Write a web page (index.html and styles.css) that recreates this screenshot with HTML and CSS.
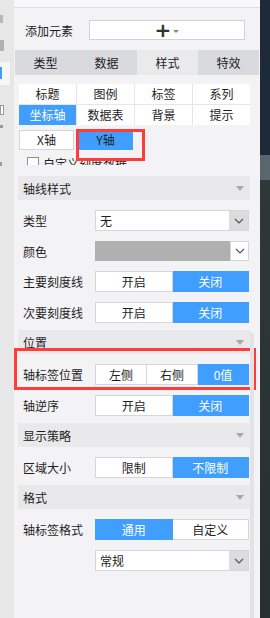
FILE: index.html
```html
<!DOCTYPE html>
<html lang="zh">
<head>
<meta charset="utf-8">
<title>样式面板</title>
<link rel="stylesheet" href="styles.css">
</head>
<body>
<nav class="rail">
  <span class="ri ri-1"></span>
  <span class="ri ri-2"></span>
  <span class="ri-active"><span class="ri-blue"></span></span>
  <span class="ri ri-4"></span>
  <span class="ri ri-5"></span>
  <span class="ri ri-6"></span>
</nav>
<main class="panel">
  <div class="topbar"></div>
  <div class="add">
    <span class="add-label">添加元素</span>
    <div class="add-input"><span class="plus">+</span><span class="caret-sm"></span></div>
  </div>
  <div class="tabs">
    <span class="tab">类型</span>
    <span class="tab">数据</span>
    <span class="tab active">样式</span>
    <span class="tab">特效</span>
  </div>
  <div class="subgrid">
    <span class="cell">标题</span>
    <span class="cell">图例</span>
    <span class="cell">标签</span>
    <span class="cell">系列</span>
    <span class="cell on">坐标轴</span>
    <span class="cell">数据表</span>
    <span class="cell">背景</span>
    <span class="cell">提示</span>
  </div>
  <div class="axis">
    <span class="axis-btn">X轴</span>
    <span class="axis-btn on">Y轴<span class="mark mark-y"></span></span>
  </div>
  <div class="check"><span class="box"></span><span class="check-text">自定义刻度数据</span></div>

  <div class="section first"><span>轴线样式</span><span class="tri"></span></div>
  <div class="row">
    <span class="label">类型</span>
    <div class="select"><span class="sel-text">无</span><span class="sel-btn"><svg width="10" height="6" viewBox="0 0 10 6"><polyline points="1,1 5,5 9,1" fill="none" stroke="#555" stroke-width="1.2"/></svg></span></div>
  </div>
  <div class="row short">
    <span class="label">颜色</span>
    <div class="color"><span class="swatch"></span><span class="color-btn"><svg width="10" height="6" viewBox="0 0 10 6"><polyline points="1,1 5,5 9,1" fill="none" stroke="#555" stroke-width="1.2"/></svg></span></div>
  </div>
  <div class="row">
    <span class="label">主要刻度线</span>
    <div class="seg"><span class="opt">开启</span><span class="opt on">关闭</span></div>
  </div>
  <div class="row">
    <span class="label">次要刻度线</span>
    <div class="seg"><span class="opt">开启</span><span class="opt on">关闭</span></div>
  </div>

  <div class="section"><span>位置</span><span class="tri"></span></div>
  <div class="row">
    <span class="label">轴标签位置</span>
    <div class="seg"><span class="opt">左侧</span><span class="opt">右侧</span><span class="opt on">0值</span></div>
    <span class="mark mark-pos"></span>
  </div>
  <div class="row">
    <span class="label">轴逆序</span>
    <div class="seg"><span class="opt">开启</span><span class="opt on">关闭</span></div>
  </div>

  <div class="section"><span>显示策略</span><span class="tri"></span></div>
  <div class="row">
    <span class="label">区域大小</span>
    <div class="seg"><span class="opt">限制</span><span class="opt on">不限制</span></div>
  </div>

  <div class="section"><span>格式</span><span class="tri"></span></div>
  <div class="row">
    <span class="label">轴标签格式</span>
    <div class="seg"><span class="opt on">通用</span><span class="opt">自定义</span></div>
  </div>
  <div class="row">
    <span class="label"></span>
    <div class="select"><span class="sel-text">常规</span><span class="sel-btn"><svg width="10" height="6" viewBox="0 0 10 6"><polyline points="1,1 5,5 9,1" fill="none" stroke="#555" stroke-width="1.2"/></svg></span></div>
  </div>
  <span class="thumb"></span>
</main>
<aside class="edge"></aside>
</body>
</html>
```
FILE: styles.css
```css
* { box-sizing: border-box; }
html, body { margin: 0; padding: 0; }
body {
  width: 270px;
  height: 618px;
  overflow: hidden;
  display: flex;
  font-family: "Noto Sans CJK SC", "Microsoft YaHei", sans-serif;
  font-size: 12px;
  color: #1e1e1e;
  background: #f3f3f5;
}

/* left rail */
.rail {
  width: 14px;
  flex: none;
  background: #e7e7e7;
  display: flex;
  flex-direction: column;
}
.ri { display: block; background: #9a9a9a; }
.ri-1 { width: 3px; height: 8px; margin-top: 15px; opacity: .6; }
.ri-2 { width: 4px; height: 11px; margin-top: 17px; opacity: .7; }
.ri-active {
  display: block;
  width: 10px;
  height: 23px;
  margin-top: 11px;
  background: #f6f6f6;
  padding-top: 5px;
}
.ri-blue { display: block; width: 2px; height: 12px; background: #409eff; }
.ri-4 { width: 4px; height: 10px; margin-top: 20px; background: #fff; border: 1px solid #9a9a9a; }
.ri-5 { width: 3px; height: 3px; margin-top: 10px; }
.ri-6 { width: 2px; height: 4px; margin-top: 34px; }

/* main panel */
.panel {
  width: 246px;
  flex: none;
  position: relative;
  background: #f3f3f5;
}
.topbar {
  height: 8px;
  background: #f8f8f9;
  border-bottom: 1px solid #dcdcdf;
}
.add {
  display: flex;
  align-items: center;
  margin-top: 12px;
  padding-left: 11px;
  height: 20px;
}
.add-label { width: 64px; }
.add-input {
  width: 156px;
  height: 20px;
  background: #fff;
  border: 1px solid #d2d2d4;
  display: flex;
  align-items: center;
  justify-content: center;
  gap: 2px;
}
.plus {
  font-family: "DejaVu Sans", sans-serif;
  font-size: 20px;
  line-height: 18px;
  font-weight: bold;
  color: #333;
}
.caret-sm {
  width: 0; height: 0;
  border-left: 3px solid transparent;
  border-right: 3px solid transparent;
  border-top: 3px solid #888;
  margin-top: 3px;
}

.tabs {
  display: flex;
  width: 244px;
  height: 25px;
  margin: 10px 0 0 1px;
}
.tab {
  flex: 1;
  display: flex;
  align-items: center;
  justify-content: center;
  background: #d9dadd;
}
.tab.active { background: #eaeaec; }

.subgrid {
  display: grid;
  grid-template-columns: repeat(4, 1fr);
  gap: 1px;
  width: 231px;
  margin: 9px 0 0 5px;
  background: #e6e6e8;
}
.cell {
  height: 20px;
  line-height: 20px;
  text-align: center;
  background: #fff;
}
.cell.on { background: #409eff; color: #fff; }

.axis {
  display: flex;
  gap: 4px;
  margin: 5px 0 0 5px;
}
.axis-btn {
  position: relative;
  width: 55px;
  height: 20px;
  line-height: 18px;
  text-align: center;
  background: #fff;
  border: 1px solid #d6d6d8;
}
.axis-btn.on { background: #409eff; border-color: #409eff; color: #1e1e1e; }

.mark {
  position: absolute;
  border: 3px solid #ff3b3b;
  pointer-events: none;
}
.mark-y { left: -3px; top: -2px; width: 69px; height: 32px; }
.mark-pos { left: -4px; top: -16px; width: 242px; height: 42px; }

.check {
  display: flex;
  gap: 4px;
  height: 8px;
  overflow: hidden;
  margin: 7px 0 0 13px;
}
.box {
  width: 12px;
  height: 12px;
  flex: none;
  background: #fff;
  border: 1px solid #8f8f8f;
}
.check-text { line-height: 12px; margin-top: 1px; }

.section {
  display: flex;
  align-items: center;
  justify-content: space-between;
  width: 232px;
  height: 24px;
  margin: 7px 0 0 4px;
  padding: 0 6px 0 5px;
  background: #e9e9eb;
}
.section.first { margin-top: 11px; }
.tri {
  width: 0; height: 0;
  border-left: 4px solid transparent;
  border-right: 4px solid transparent;
  border-top: 5px solid #a8a8aa;
}

.row {
  position: relative;
  display: flex;
  align-items: center;
  width: 231px;
  height: 21px;
  margin: 10px 0 0 4px;
}
.row.short { height: 20px; }
.label {
  width: 77px;
  flex: none;
  padding-left: 5px;
  white-space: nowrap;
}

.select {
  display: flex;
  width: 154px;
  height: 21px;
  background: #fff;
  border: 1px solid #d6d6d8;
}
.sel-text { flex: 1; padding-left: 4px; line-height: 19px; }
.sel-btn {
  width: 19px;
  display: flex;
  align-items: center;
  justify-content: center;
  background: #dcdcdf;
}

.color { display: flex; width: 154px; height: 20px; }
.swatch { flex: 1; background: #b0b0b0; }
.color-btn {
  width: 19px;
  display: flex;
  align-items: center;
  justify-content: center;
  background: #fff;
  border: 1px solid #d6d6d8;
}

.seg { display: flex; width: 154px; height: 21px; }
.opt {
  flex: 1;
  display: flex;
  align-items: center;
  justify-content: center;
  background: #fff;
  border: 1px solid #d6d6d8;
}
.opt + .opt { border-left: 0; }
.opt.on { background: #409eff; border-color: #409eff; color: #fff; }

.thumb {
  position: absolute;
  left: 236px;
  top: 333px;
  width: 4px;
  bottom: 0;
  background: #e3e3e5;
}

/* right dark edge */
.edge {
  width: 10px;
  flex: none;
  background: linear-gradient(#1f2a38 0, #1f2a38 155px, #5a666e 155px, #5a666e 180px, #2e3839 180px, #272f31 618px);
}
```
